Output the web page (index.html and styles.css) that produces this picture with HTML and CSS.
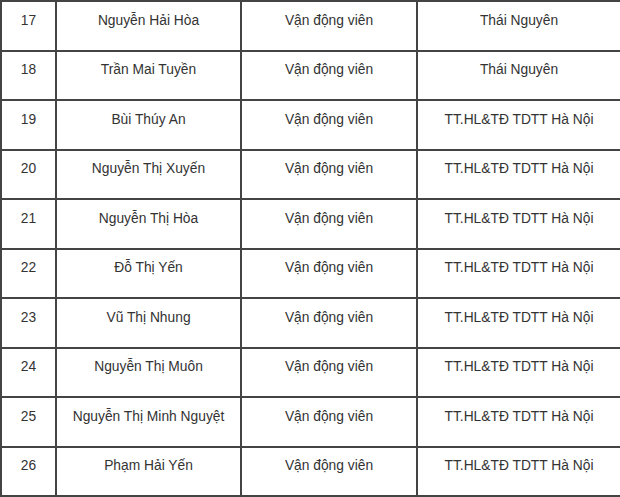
FILE: index.html
```html
<!DOCTYPE html>
<html lang="vi">
<head>
<meta charset="utf-8">
<title>Danh sách vận động viên</title>
<link rel="stylesheet" href="styles.css">
</head>
<body>
<table class="roster">
  <colgroup>
    <col class="c-no">
    <col class="c-name">
    <col class="c-role">
    <col class="c-unit">
  </colgroup>
  <tbody>
    <tr><td>17</td><td>Nguyễn Hải Hòa</td><td>Vận động viên</td><td>Thái Nguyên</td></tr>
    <tr><td>18</td><td>Trần Mai Tuyền</td><td>Vận động viên</td><td>Thái Nguyên</td></tr>
    <tr><td>19</td><td>Bùi Thúy An</td><td>Vận động viên</td><td>TT.HL&amp;TĐ TDTT Hà Nội</td></tr>
    <tr><td>20</td><td>Nguyễn Thị Xuyến</td><td>Vận động viên</td><td>TT.HL&amp;TĐ TDTT Hà Nội</td></tr>
    <tr><td>21</td><td>Nguyễn Thị Hòa</td><td>Vận động viên</td><td>TT.HL&amp;TĐ TDTT Hà Nội</td></tr>
    <tr><td>22</td><td>Đỗ Thị Yến</td><td>Vận động viên</td><td>TT.HL&amp;TĐ TDTT Hà Nội</td></tr>
    <tr><td>23</td><td>Vũ Thị Nhung</td><td>Vận động viên</td><td>TT.HL&amp;TĐ TDTT Hà Nội</td></tr>
    <tr><td>24</td><td>Nguyễn Thị Muôn</td><td>Vận động viên</td><td>TT.HL&amp;TĐ TDTT Hà Nội</td></tr>
    <tr><td>25</td><td>Nguyễn Thị Minh Nguyệt</td><td>Vận động viên</td><td>TT.HL&amp;TĐ TDTT Hà Nội</td></tr>
    <tr><td>26</td><td>Phạm Hải Yến</td><td>Vận động viên</td><td>TT.HL&amp;TĐ TDTT Hà Nội</td></tr>
  </tbody>
</table>
</body>
</html>
```
FILE: styles.css
```css
html, body {
  margin: 0;
  padding: 0;
  background: #ffffff;
}

.roster {
  width: 620px;
  table-layout: fixed;
  border-collapse: collapse;
  font-family: "Liberation Sans", Arial, sans-serif;
  font-size: 13.8px;
  color: #333333;
}

.c-no { width: 55px; }
.c-name { width: 185px; }
.c-role { width: 176px; }
.c-unit { width: 204px; }

.roster td {
  border: 2px solid #444444;
  height: 49.5px;
  padding: 0 4px 11px;
  box-sizing: border-box;
  text-align: center;
  vertical-align: middle;
}
```
